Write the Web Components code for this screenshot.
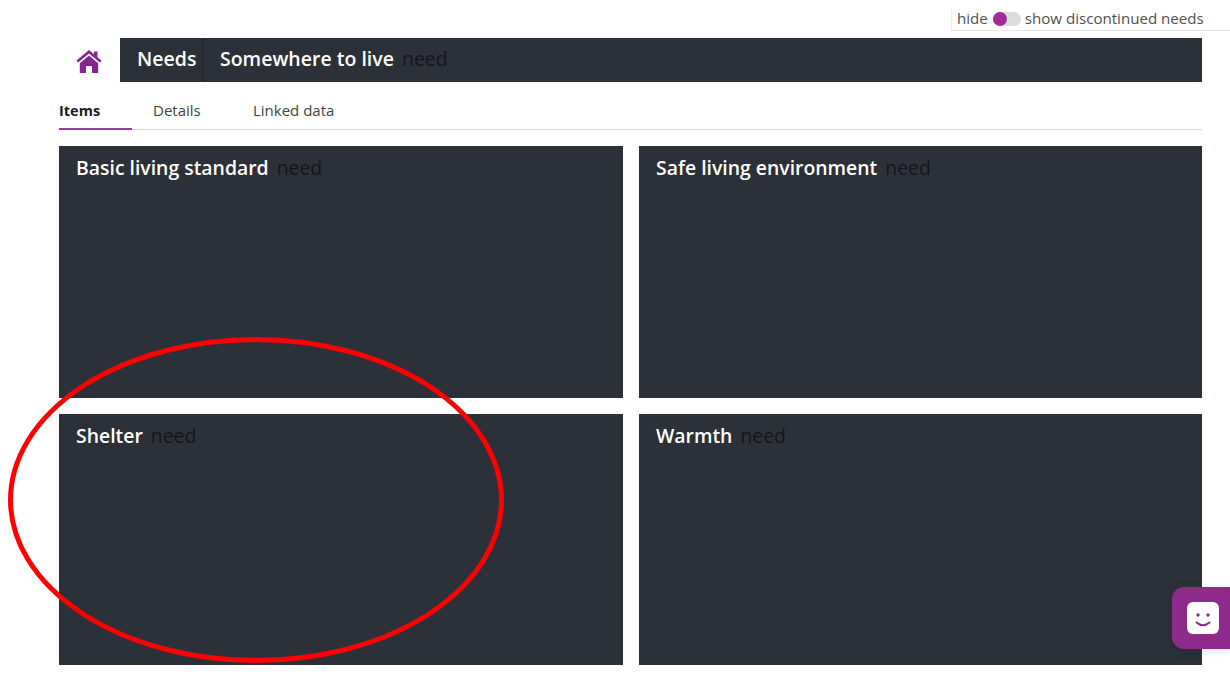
<!DOCTYPE html>
<html>
<head>
<meta charset="utf-8">
<style>
html, body { margin: 0; height: 678px; overflow: hidden; background: #fff; }
body { font-family: "Open Sans", "Noto Sans", sans-serif; position: relative; }
</style>
</head>
<body>
<app-page>
  <toggle-bar slot="toggle"></toggle-bar>
  <bread-bar slot="crumbs" title-text="Somewhere to live" kind="need">Needs</bread-bar>
  <tab-strip slot="tabs"></tab-strip>
  <need-card title-text="Basic living standard" kind="need"></need-card>
  <need-card title-text="Safe living environment" kind="need"></need-card>
  <need-card title-text="Shelter" kind="need"></need-card>
  <need-card title-text="Warmth" kind="need"></need-card>
</app-page>
<chat-button></chat-button>
<red-circle></red-circle>

<script>
(function() {

class AppPage extends HTMLElement {
	constructor() {
		super();
		this.attachShadow({mode: 'open'}).innerHTML = `
<style>
:host { display: block; box-sizing: border-box; height: 678px; padding-top: 8px; }
.top { display: flex; justify-content: flex-end; height: 30px; }
.main { padding: 0 28px 0 59px; }
.grid { display: grid; grid-template-columns: 564px 563px; grid-template-rows: 252px 251px; gap: 16px; margin-top: 16px; }
</style>
<div class="top"><slot name="toggle"></slot></div>
<div class="main">
  <slot name="crumbs"></slot>
  <slot name="tabs"></slot>
  <div class="grid"><slot></slot></div>
</div>`;
	}
}
customElements.define('app-page', AppPage);

class ToggleBar extends HTMLElement {
	constructor() {
		super();
		this.attachShadow({mode: 'open'}).innerHTML = `
<style>
:host { display: flex; align-items: center; box-sizing: border-box; width: 279px; height: 23px; padding: 0 0 2px 5px;
  border-left: 1px solid #eee; border-bottom: 1px solid #e8e8e8; font-size: 15.1px; color: #505050; }
.sw { width: 28px; height: 14px; border-radius: 7px; background: #dcdcdc; margin: 2px 4px 0 5px; position: relative; flex: none; }
.sw::before { content: ""; position: absolute; left: 0; top: 0; width: 14px; height: 14px; border-radius: 50%; background: #a12a9c; }
span { white-space: nowrap; }
</style>
<span>hide</span><div class="sw"></div><span>show discontinued needs</span>`;
	}
}
customElements.define('toggle-bar', ToggleBar);

class BreadBar extends HTMLElement {
	constructor() {
		super();
		this.attachShadow({mode: 'open'}).innerHTML = `
<style>
:host { display: flex; height: 44px; }
.home { width: 61px; flex: none; display: flex; align-items: center; justify-content: center; }
.home svg { width: 26px; height: 23px; margin: 2px 2px 0 0; }
.bar { flex: 1; display: flex; align-items: center; background: #2c3038; font-size: 19.5px; font-weight: 600; color: #fff; white-space: nowrap; padding-bottom: 3px; box-sizing: border-box; }
.root { height: 44px; margin-bottom: -3px; width: 84px; box-sizing: border-box; display: flex; align-items: center; padding: 0 0 3px 17px; border-right: 2px solid #262931; flex: none; }
.cur { padding-left: 16px; }
.kind { font-weight: 400; color: #14161c; margin-left: 8px; }
</style>
<div class="home">
  <svg viewBox="0 0 26 23"><path fill="#83278f" d="M13 0 L0.5 10.6 L2.2 12.6 L13 3.4 L23.8 12.6 L25.5 10.6 L21.5 7.2 V1.5 H18 V4.2 Z M13 5.4 L3.8 13.2 V23 H10 V16 H16 V23 H22.2 V13.2 Z"/></svg>
</div>
<div class="bar">
  <div class="root"><slot></slot></div>
  <div class="cur">${this.getAttribute('title-text')}</div>
  <div class="kind">${this.getAttribute('kind')}</div>
</div>`;
	}
}
customElements.define('bread-bar', BreadBar);

class TabStrip extends HTMLElement {
	constructor() {
		super();
		this.attachShadow({mode: 'open'}).innerHTML = `
<style>
:host { display: flex; height: 48px; box-sizing: border-box; border-bottom: 1px solid #d9d9d9; font-size: 15px; color: #444; }
div { height: 47px; box-sizing: border-box; padding-top: 18px; white-space: nowrap; }
.on { width: 73px; padding-top: 19px; font-weight: 700; font-size: 14.5px; color: #1c1c1c; position: relative; }
.on::after { content: ""; position: absolute; left: 0; right: 0; bottom: -1px; height: 2px; background: #963a9b; }
.d { margin-left: 21px; width: 100px; }
</style>
<div class="on">Items</div><div class="d">Details</div><div>Linked data</div>`;
	}
}
customElements.define('tab-strip', TabStrip);

class NeedCard extends HTMLElement {
	constructor() {
		super();
		this.attachShadow({mode: 'open'}).innerHTML = `
<style>
:host { display: block; box-sizing: border-box; background: #2c3038; padding: 7.5px 17px; font-size: 19.4px; white-space: nowrap; }
b { font-weight: 600; color: #fff; }
span { color: #14161c; margin-left: 8px; }
</style>
<b>${this.getAttribute('title-text')}</b><span>${this.getAttribute('kind')}</span>`;
	}
}
customElements.define('need-card', NeedCard);

class ChatButton extends HTMLElement {
	constructor() {
		super();
		this.attachShadow({mode: 'open'}).innerHTML = `
<style>
:host { display: flex; align-items: center; position: absolute; left: 1172px; top: 587px; width: 58px; height: 62px; box-sizing: border-box;
  padding-left: 15px; background: #8e2a8b; border-radius: 12px 0 0 12px; box-shadow: 0 2px 10px rgba(0,0,0,.12); }
svg { width: 32px; height: 32px; }
</style>
<svg viewBox="0 0 32 32">
  <rect width="32" height="32" rx="6" fill="#fff"/>
  <circle cx="11" cy="13" r="1.7" fill="#8e2a8b"/>
  <circle cx="21" cy="13" r="1.7" fill="#8e2a8b"/>
  <path d="M9.5 20.5 Q16 26 22.5 20.5" fill="none" stroke="#8e2a8b" stroke-width="2" stroke-linecap="round"/>
</svg>`;
	}
}
customElements.define('chat-button', ChatButton);

class RedCircle extends HTMLElement {
	constructor() {
		super();
		this.attachShadow({mode: 'open'}).innerHTML = `
<style>
:host { display: block; position: absolute; left: 0; top: 330px; width: 520px; height: 340px; pointer-events: none; }
svg { display: block; width: 100%; height: 100%; }
</style>
<svg viewBox="0 0 520 340"><ellipse cx="256" cy="170" rx="245.5" ry="160.5" fill="none" stroke="#fe0000" stroke-width="5"/></svg>`;
	}
}
customElements.define('red-circle', RedCircle);

})();
</script>
</body>
</html>
